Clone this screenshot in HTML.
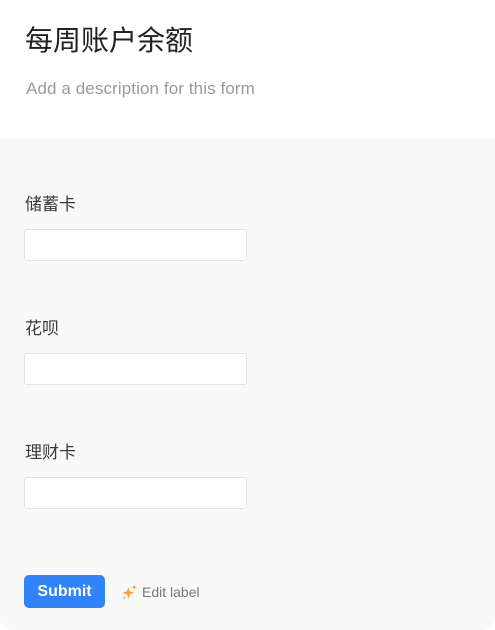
<!DOCTYPE html>
<html><head><meta charset="utf-8"><style>
html,body{margin:0;padding:0;background:#fff;}
body{width:495px;height:630px;position:relative;overflow:hidden;font-family:"Liberation Sans","Noto Sans CJK SC",sans-serif;}
.top{position:absolute;left:0;top:0;width:495px;height:138px;background:#fff;}
h1{position:absolute;left:25px;top:23px;margin:0;font-size:28px;font-weight:400;color:#222;line-height:36px;}
.desc{position:absolute;left:26px;top:78px;font-size:17px;color:#9a9a9a;line-height:22px;letter-spacing:0.1px;}
.body{position:absolute;left:0;top:138px;width:495px;height:492px;background:#f9f9f9;border-radius:0 0 12px 12px;}
.lab{position:absolute;left:25px;font-size:17px;color:#3a3a3a;line-height:22px;}
.inp{position:absolute;left:24px;width:221px;height:30px;background:#fff;border:1.5px solid #e2e2e2;border-radius:3px;}
.btn{position:absolute;left:24px;top:575px;width:81px;height:33px;background:#3083f8;border-radius:5px;color:#fff;font-weight:700;font-size:16px;line-height:34px;text-align:center;}
.edit{position:absolute;left:122px;top:583px;font-size:14px;color:#777;line-height:18px;}
</style></head><body>
<div class="top"><h1>每周账户余额</h1><div class="desc">Add a description for this form</div></div>
<div class="body"></div>
<div class="lab" style="top:194px">储蓄卡</div>
<div class="inp" style="top:229px"></div>
<div class="lab" style="top:318px">花呗</div>
<div class="inp" style="top:353px"></div>
<div class="lab" style="top:442px">理财卡</div>
<div class="inp" style="top:477px"></div>
<div class="btn">Submit</div>
<div class="edit"><svg width="16" height="16" viewBox="0 0 15 15" style="vertical-align:-3px;margin-right:4px"><path d="M6 3 L7.4 6.8 L11.5 8.2 L7.4 9.6 L6 13.8 L4.6 9.6 L0.5 8.2 L4.6 6.8Z" fill="#f5a623"/><path d="M11.5 0.3 L12.2 2.3 L14.3 3 L12.2 3.7 L11.5 5.7 L10.8 3.7 L8.7 3 L10.8 2.3Z" fill="#f5a623"/><path d="M2 11.5 L2.5 12.5 L3.5 13 L2.5 13.5 L2 14.5 L1.5 13.5 L0.5 13 L1.5 12.5Z" fill="#f5a623"/></svg>Edit label</div>
</body></html>
